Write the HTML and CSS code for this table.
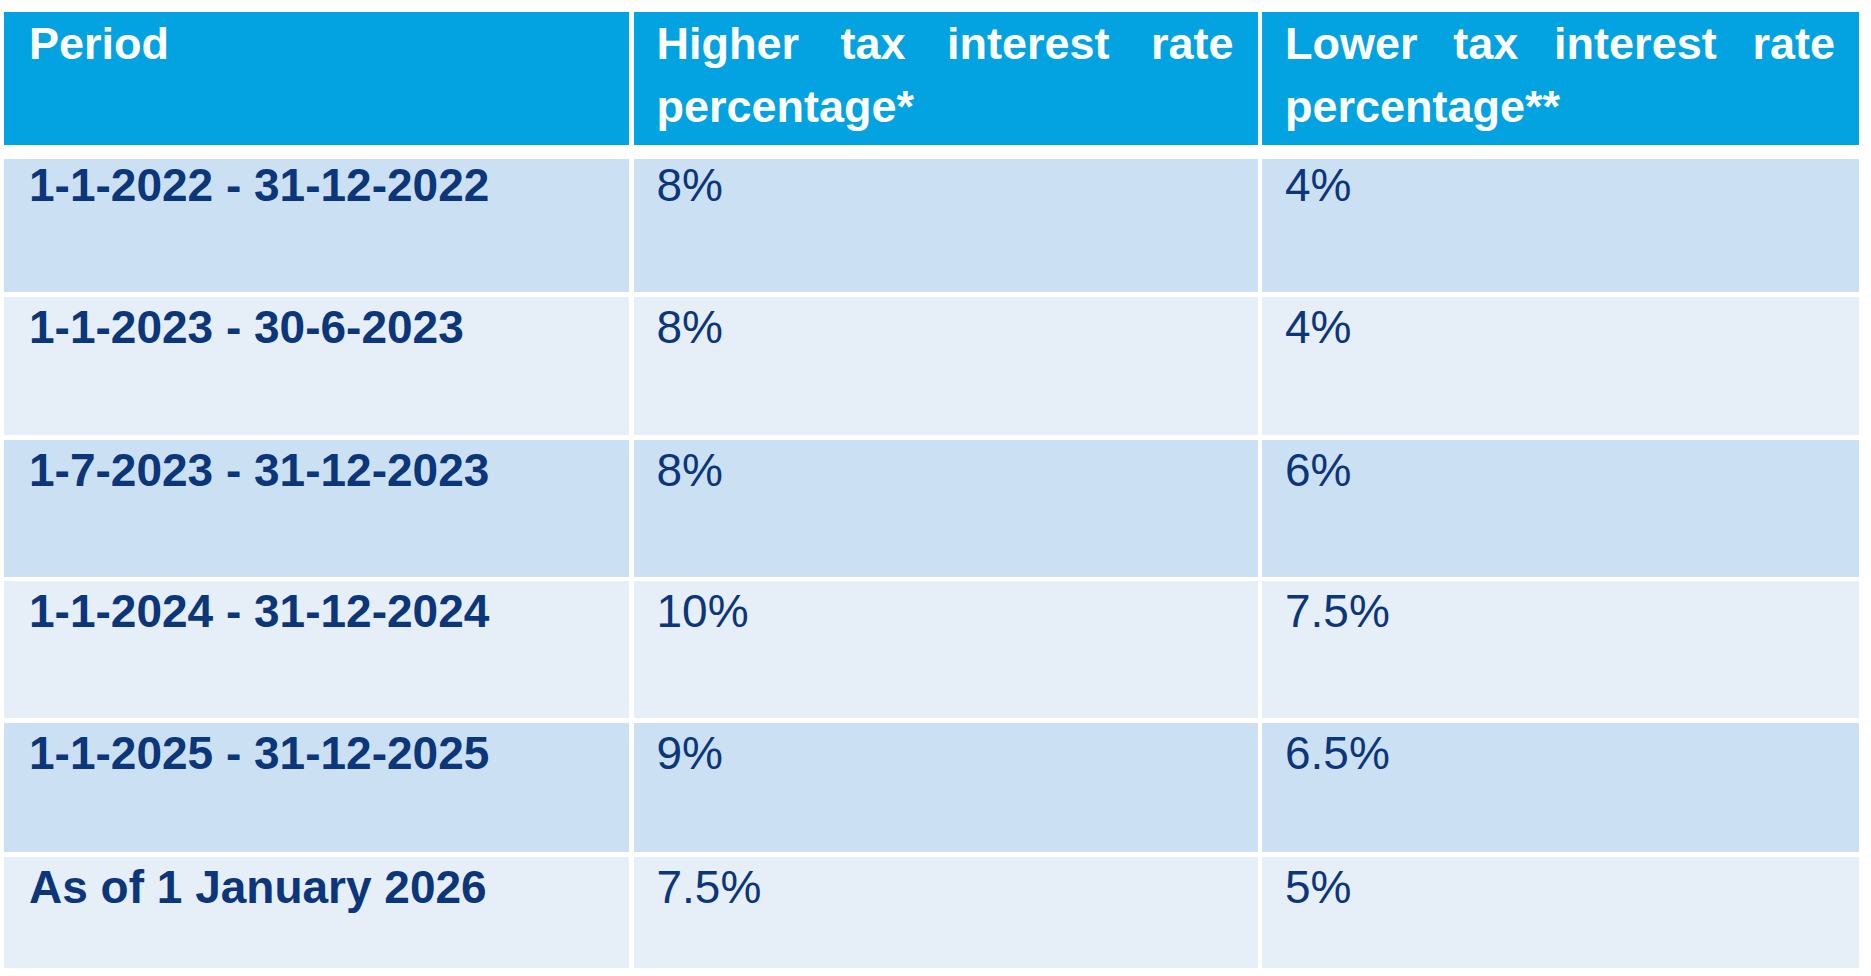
FILE: index.html
```html
<!DOCTYPE html>
<html lang="en">
<head>
<meta charset="utf-8">
<title>Tax interest rates</title>
<link rel="stylesheet" href="styles.css">
</head>
<body>
<div class="rates">
  <div class="head">
    <div class="hcell period-col">Period</div>
    <div class="hcell">Higher tax interest rate percentage*</div>
    <div class="hcell">Lower tax interest rate percentage**</div>
  </div>
  <div class="body">
    <div class="cell period dark first">1-1-2022 - 31-12-2022</div>
    <div class="cell dark first">8%</div>
    <div class="cell dark first">4%</div>

    <div class="cell period light">1-1-2023 - 30-6-2023</div>
    <div class="cell light">8%</div>
    <div class="cell light">4%</div>

    <div class="cell period dark">1-7-2023 - 31-12-2023</div>
    <div class="cell dark">8%</div>
    <div class="cell dark">6%</div>

    <div class="cell period light">1-1-2024 - 31-12-2024</div>
    <div class="cell light">10%</div>
    <div class="cell light">7.5%</div>

    <div class="cell period dark">1-1-2025 - 31-12-2025</div>
    <div class="cell dark">9%</div>
    <div class="cell dark">6.5%</div>

    <div class="cell period light">As of 1 January 2026</div>
    <div class="cell light">7.5%</div>
    <div class="cell light">5%</div>
  </div>
</div>
</body>
</html>
```
FILE: styles.css
```css
html, body {
  margin: 0;
  padding: 0;
  background: #ffffff;
}

body {
  font-family: "Liberation Sans", Arial, sans-serif;
}

.rates {
  padding: 12px 0 0 4px;
}

.head,
.body {
  display: grid;
  grid-template-columns: 625px 624px 597px;
  column-gap: 4.5px;
}

.head {
  height: 133px;
  margin-bottom: 14px;
}

.hcell {
  background: #02a3e0;
  color: #ffffff;
  font-weight: bold;
  font-size: 45px;
  line-height: 63px;
  padding: 0 24px 0 23px;
  text-align: justify;
}

.body {
  grid-template-rows: 133px 138px 137px 137px 129px 111px;
  row-gap: 4.8px;
}

.cell {
  color: #0b3679;
  font-size: 46px;
  line-height: 53px;
  padding: 4px 24px 0 23px;
}

.hcell.period-col,
.cell.period {
  padding-left: 25px;
}

.cell.first {
  padding-top: 0;
}

.period {
  font-weight: bold;
}

.dark {
  background: #cbe0f3;
}

.light {
  background: #e6eef8;
}
```
